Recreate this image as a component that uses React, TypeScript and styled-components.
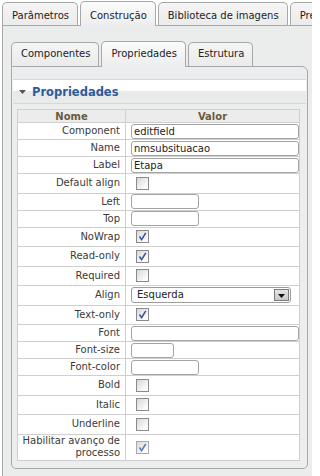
import React from "react";
import styled, { createGlobalStyle } from "styled-components";

type Prop = {
  label: string;
  kind: "text" | "check" | "select";
  value?: string;
  width?: number;
  checked?: boolean;
  soft?: boolean;
};

const props: Prop[] = [
  { label: "Component", kind: "text", value: "editfield", width: 168 },
  { label: "Name", kind: "text", value: "nmsubsituacao", width: 168 },
  { label: "Label", kind: "text", value: "Etapa", width: 168 },
  { label: "Default align", kind: "check" },
  { label: "Left", kind: "text", width: 68 },
  { label: "Top", kind: "text", width: 68 },
  { label: "NoWrap", kind: "check", checked: true },
  { label: "Read-only", kind: "check", checked: true },
  { label: "Required", kind: "check" },
  { label: "Align", kind: "select", value: "Esquerda" },
  { label: "Text-only", kind: "check", checked: true },
  { label: "Font", kind: "text", width: 168 },
  { label: "Font-size", kind: "text", width: 43 },
  { label: "Font-color", kind: "text", width: 68 },
  { label: "Bold", kind: "check" },
  { label: "Italic", kind: "check" },
  { label: "Underline", kind: "check" },
  { label: "Habilitar avanço de processo", kind: "check", checked: true, soft: true },
];

const outerTabs = ["Parâmetros", "Construção", "Biblioteca de imagens", "Pré-visualização"];
const innerTabs = ["Componentes", "Propriedades", "Estrutura"];

export default function App() {
  return (
    <>
      <GlobalStyle />
      <Page>
        <TabBar>
          {outerTabs.map((t) => (
            <Tab key={t} $active={t === "Construção"}>
              {t}
            </Tab>
          ))}
        </TabBar>
        <OuterPanel>
          <TabBar>
            {innerTabs.map((t) => (
              <Tab key={t} $inner $active={t === "Propriedades"}>
                {t}
              </Tab>
            ))}
          </TabBar>
          <InnerPanel>
            <SectionHeader>
              <svg width="7" height="4" viewBox="0 0 7 4">
                <path d="M0 0 H7 L3.5 4 Z" fill="#555" />
              </svg>
              <SectionTitle>Propriedades</SectionTitle>
            </SectionHeader>
            <TableWrap>
              <PropTable>
                <colgroup>
                  <col style={{ width: 108 }} />
                  <col />
                </colgroup>
                <thead>
                  <tr>
                    <HeadCell>Nome</HeadCell>
                    <HeadCell>Valor</HeadCell>
                  </tr>
                </thead>
                <tbody>
                  {props.map((p) => (
                    <Row
                      key={p.label}
                      $h={p.soft ? 26 : p.kind === "text" ? 17 : 19.5}
                    >
                      <LabelCell>{p.label}</LabelCell>
                      <ValueCell $check={p.kind === "check"}>
                        {p.kind === "text" && (
                          <TextInput $w={p.width ?? 168} value={p.value ?? ""} readOnly />
                        )}
                        {p.kind === "check" && (
                          <CheckBox $soft={p.soft}>
                            {p.checked && (
                              <svg width="11" height="11" viewBox="0 0 11 11">
                                <path
                                  d="M2.5 5.5 L4.6 8.6 L8.8 1.8"
                                  fill="none"
                                  stroke={p.soft ? "#5a78c0" : "#3556a8"}
                                  strokeWidth="1.6"
                                />
                              </svg>
                            )}
                          </CheckBox>
                        )}
                        {p.kind === "select" && (
                          <Select>
                            <span>{p.value}</span>
                            <SelectButton>
                              <svg width="7" height="4" viewBox="0 0 7 4">
                                <path d="M0 0 H7 L3.5 4 Z" fill="#111" />
                              </svg>
                            </SelectButton>
                          </Select>
                        )}
                      </ValueCell>
                    </Row>
                  ))}
                </tbody>
              </PropTable>
            </TableWrap>
          </InnerPanel>
        </OuterPanel>
      </Page>
    </>
  );
}

const GlobalStyle = createGlobalStyle`
  html, body {
    margin: 0;
    padding: 0;
    background: #fff;
  }
  body {
    font-family: "DejaVu Sans", Verdana, sans-serif;
    font-size: 10px;
    color: #333;
    overflow: hidden;
  }
`;

const Page = styled.div`
  width: 312px;
  height: 476px;
  overflow: hidden;
  display: flex;
  flex-direction: column;
  padding-left: 2px;
  box-sizing: border-box;
`;

const TabBar = styled.div`
  display: flex;
  align-items: flex-end;
  gap: 2px;
  height: 25px;
  flex-shrink: 0;
  position: relative;
  z-index: 1;
`;

const Tab = styled.div<{ $active?: boolean; $inner?: boolean }>`
  box-sizing: border-box;
  flex-shrink: 0;
  white-space: nowrap;
  height: ${(p) => (p.$inner ? 24 : 23) + (p.$active ? 2 : 0)}px;
  margin-bottom: ${(p) => (p.$active ? -1 : 0)}px;
  padding: ${(p) => (p.$inner ? 5 : 7) + (p.$active ? 1 : 0)}px 8px 0 9px;
  line-height: 12px;
  font-size: 10px;
  color: #222;
  border: 1px solid #a8a8a8;
  border-bottom: none;
  border-radius: 5px 5px 0 0;
  background: ${(p) =>
    p.$active
      ? "linear-gradient(#fbfbfb, #ecedee)"
      : "linear-gradient(#f5f5f5, #ebebeb)"};
`;

const OuterPanel = styled.div`
  flex: 1;
  width: 340px;
  box-sizing: border-box;
  background: #ebeded;
  border-top: 1px solid #a8a8a8;
  border-left: 1px solid #a8a8a8;
  padding: 15px 0 0 8px;
`;

const InnerPanel = styled.div`
  width: 297px;
  box-sizing: border-box;
  background: #ecedee;
  border: 1px solid #a8a8a8;
  border-radius: 0 6px 5px 5px;
  padding: 12px 1px 7px 1px;
`;

const SectionHeader = styled.div`
  display: flex;
  align-items: center;
  gap: 6px;
  height: 25px;
  box-sizing: border-box;
  padding-left: 6px;
  border-top: 1px solid #d6d8d8;
  border-bottom: 1px solid #d6d8d8;
  background: linear-gradient(#ffffff 0, #ffffff 48%, #e9ebeb 48%, #e9ebeb 100%);
`;

const SectionTitle = styled.span`
  font-weight: bold;
  font-size: 11.5px;
  color: #2d5c9c;
`;

const TableWrap = styled.div`
  padding: 5px 0 0 4px;
`;

const PropTable = styled.table`
  border-collapse: collapse;
  table-layout: fixed;
  width: 283px;
  background: #fff;
  border: 1px solid #cfcfcf;
`;

const HeadCell = styled.th`
  height: 12px;
  padding: 0;
  line-height: 11px;
  font-size: 10px;
  font-weight: bold;
  color: #6c5a3e;
  background: #ececec;
  border: 1px solid #cfcfcf;
  text-align: center;
`;

const Row = styled.tr<{ $h: number }>`
  height: ${(p) => p.$h}px;
`;

const LabelCell = styled.td`
  padding: 0 5px 0 0;
  text-align: right;
  line-height: 12px;
  color: #3a3a3a;
  border: 1px solid #cfcfcf;
  vertical-align: middle;
`;

const ValueCell = styled.td<{ $check?: boolean }>`
  padding: 0 0 0 ${(p) => (p.$check ? 10 : 5)}px;
  border: 1px solid #cfcfcf;
  vertical-align: middle;
  line-height: 0;
`;

const TextInput = styled.input<{ $w: number }>`
  display: block;
  box-sizing: border-box;
  width: ${(p) => p.$w}px;
  height: 15px;
  margin: 0;
  padding: 0 2px;
  border: 1px solid #a4a4a4;
  border-radius: 3px;
  background: #fff;
  font-family: "DejaVu Sans", Verdana, sans-serif;
  font-size: 10px;
  line-height: 13px;
  color: #222;
  outline: none;
`;

const CheckBox = styled.span<{ $soft?: boolean }>`
  display: flex;
  align-items: center;
  justify-content: center;
  box-sizing: border-box;
  width: 13px;
  height: 13px;
  border: 1px solid ${(p) => (p.$soft ? "#a9a9a9" : "#8a8a8a")};
  background: linear-gradient(135deg, #d8d8d8, #f7f7f7 70%, #ffffff);
`;

const Select = styled.div`
  display: flex;
  align-items: center;
  justify-content: space-between;
  box-sizing: border-box;
  width: 160px;
  height: 16px;
  padding: 0 1px 0 5px;
  border: 1px solid #9c9c9c;
  border-radius: 3px;
  background: #fff;
  font-size: 10px;
  line-height: 14px;
  color: #222;
`;

const SelectButton = styled.span`
  display: flex;
  align-items: flex-end;
  justify-content: center;
  box-sizing: border-box;
  width: 15px;
  height: 12px;
  padding-bottom: 2px;
  border: 1px solid #7a7a7a;
  background: linear-gradient(#e6e6e6, #c9c9c9);
`;
